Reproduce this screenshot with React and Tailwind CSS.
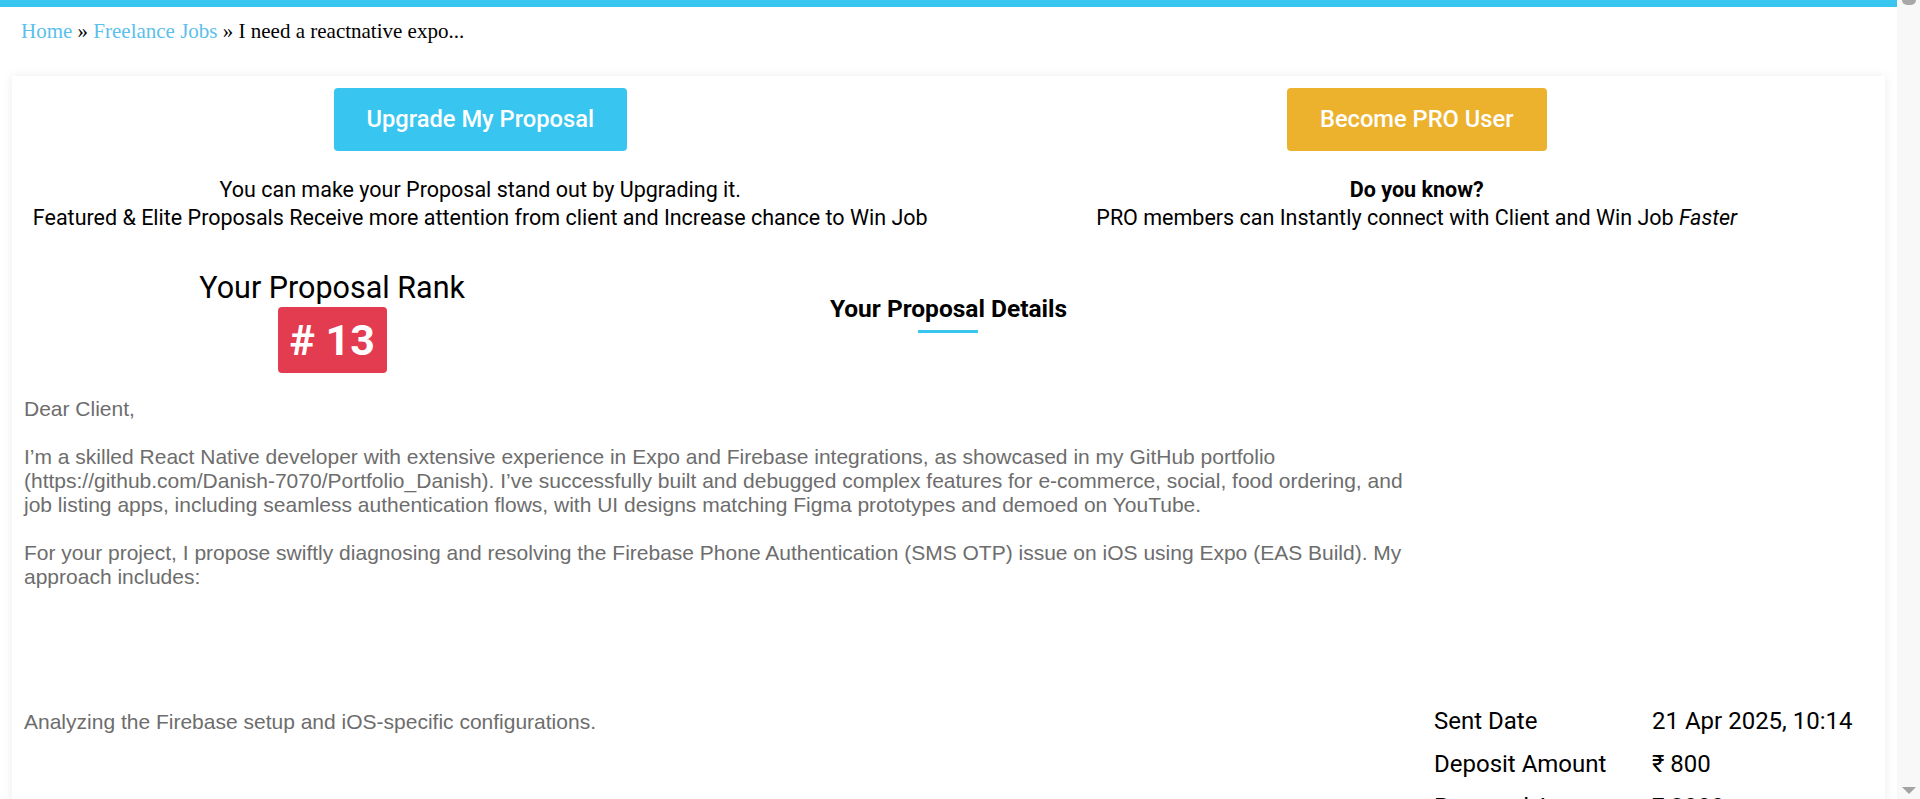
import React from 'react';

const details = [
  { label: 'Sent Date', value: '21 Apr 2025, 10:14' },
  { label: 'Deposit Amount', value: '₹ 800' },
  { label: 'Proposal Amount', value: '₹ 8000' },
];

function Breadcrumb() {
  return (
    <nav className="mt-[12px] pl-[21px] font-['Liberation_Serif',serif] text-[21px] leading-[24px] text-black">
      <a className="text-[#5bc0eb]">Home</a> » <a className="text-[#5bc0eb]">Freelance Jobs</a> » I need a reactnative expo...
    </nav>
  );
}

function ScrollBar() {
  return (
    <div className="flex w-[23px] shrink-0 flex-col items-center justify-between bg-[#f8f8f8] pb-[5px]">
      <div className="h-[5px] w-[14px] rounded-b-full bg-[#a8a8a8]" />
      <div className="h-0 w-0 border-x-[7px] border-t-[7px] border-x-transparent border-t-[#a3a3a3]" />
    </div>
  );
}

export default function App() {
  return (
    <div className="flex h-[799px] overflow-hidden bg-white">
      <div className="min-w-0 flex-1">
        <div className="h-[7px] bg-[#38c6f0]" />
        <Breadcrumb />

        <div className="mx-[12px] mt-[33px] bg-white px-[12px] pb-10 pt-[12px] font-['Roboto',sans-serif] text-black shadow-[0_0_10px_rgba(0,0,0,0.08)]">
          {/* top call-to-action row */}
          <div className="-mx-[12px] grid grid-cols-2">
            <div className="flex flex-col items-center">
              <button className="h-[63px] rounded-[4px] bg-[#38c6f0] px-[33px] text-[23.7px] font-medium text-white">
                Upgrade My Proposal
              </button>
              <p className="mt-[25px] text-center text-[21.5px] leading-[28px]">
                You can make your Proposal stand out by Upgrading it.
                <br />
                Featured &amp; Elite Proposals Receive more attention from client and Increase chance to Win Job
              </p>
            </div>
            <div className="flex flex-col items-center">
              <button className="h-[63px] rounded-[4px] bg-[#ecb22e] px-[33px] text-[23.7px] font-medium text-white">
                Become PRO User
              </button>
              <p className="mt-[25px] text-center text-[21.5px] leading-[28px]">
                <b>Do you know?</b>
                <br />
                PRO members can Instantly connect with Client and Win Job <i>Faster</i>
              </p>
            </div>
          </div>

          {/* rank + heading */}
          <div className="mt-[38px] grid grid-cols-3 items-start">
            <div className="flex flex-col items-center">
              <h3 className="text-[30.5px] leading-[36px]">Your Proposal Rank</h3>
              <span className="mt-[1px] flex h-[66px] w-[109px] items-center justify-center rounded-[4px] bg-[#e33b4f] text-[43px] font-bold text-white">
                # 13
              </span>
            </div>
            <div className="mt-[24px] flex flex-col items-center">
              <h4 className="text-[24.5px] font-bold leading-[30px]">Your Proposal Details</h4>
              <span className="mt-[6px] h-[3px] w-[60px] bg-[#38c6f0]" />
            </div>
          </div>

          {/* proposal body + details table */}
          <div className="mt-[24px] flex">
            <div className="w-[1390px] shrink-0 font-['Liberation_Sans',Arial,sans-serif] text-[21px] leading-[24.1px] text-[#6d6d6d]">
              <p>Dear Client,</p>
              <p className="mt-[24px]">
                I’m a skilled React Native developer with extensive experience in Expo and Firebase integrations, as showcased in my GitHub portfolio (https://github.com/Danish-7070/Portfolio_Danish). I’ve successfully built and debugged complex features for e-commerce, social, food ordering, and job listing apps, including seamless authentication flows, with UI designs matching Figma prototypes and demoed on YouTube.
              </p>
              <p className="mt-[24px]">
                For your project, I propose swiftly diagnosing and resolving the Firebase Phone Authentication (SMS OTP) issue on iOS using Expo (EAS Build). My approach includes:
              </p>
              <p className="mt-[120px]">Analyzing the Firebase setup and iOS-specific configurations.</p>
            </div>
            <div className="ml-[20px] mt-[302px] flex-1 text-[24px]">
              {details.map((d) => (
                <div key={d.label} className="flex h-[43px] items-center">
                  <span className="w-[218px] shrink-0">{d.label}</span>
                  <span>{d.value}</span>
                </div>
              ))}
            </div>
          </div>
        </div>
      </div>
      <ScrollBar />
    </div>
  );
}
